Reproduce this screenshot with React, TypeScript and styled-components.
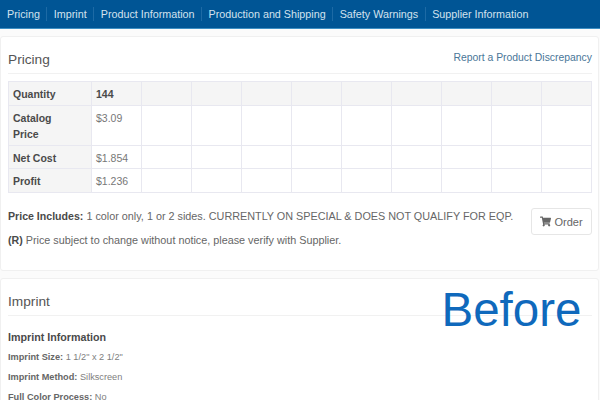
import React from 'react';
import styled, { createGlobalStyle } from 'styled-components';
import { FaShoppingCart } from 'react-icons/fa';

const navItems = [
    'Pricing',
    'Imprint',
    'Product Information',
    'Production and Shipping',
    'Safety Warnings',
    'Supplier Information',
];

const priceRows = [
    { label: 'Quantity', value: '144', header: true, compact: false },
    { label: 'Catalog Price', value: '$3.09', header: false, compact: false },
    { label: 'Net Cost', value: '$1.854', header: false, compact: true },
    { label: 'Profit', value: '$1.236', header: false, compact: false },
];

const emptyCells = Array.from({ length: 9 }, (_, i) => i);

const App = () => {
    return (
        <Page>
            <GlobalStyle />
            <Nav>
                {navItems.map((item) => (
                    <NavLink key={item}>{item}</NavLink>
                ))}
            </Nav>
            <Panel>
                <PanelHeader>
                    <PanelTitle>Pricing</PanelTitle>
                    <ReportLink>Report a Product Discrepancy</ReportLink>
                </PanelHeader>
                <PriceTable>
                    <colgroup>
                        <LabelCol />
                        <ValueCol />
                        {emptyCells.map((i) => (
                            <ValueCol key={i} />
                        ))}
                    </colgroup>
                    <tbody>
                        {priceRows.map((row) => (
                            <tr key={row.label}>
                                <LabelCell $compact={row.compact}>{row.label}</LabelCell>
                                <ValueCell $header={row.header} $compact={row.compact}>
                                    {row.value}
                                </ValueCell>
                                {emptyCells.map((i) => (
                                    <ValueCell key={i} $header={row.header} $compact={row.compact} />
                                ))}
                            </tr>
                        ))}
                    </tbody>
                </PriceTable>
                <NotesRow>
                    <Notes>
                        <Note>
                            <strong>Price Includes:</strong> 1 color only, 1 or 2 sides. CURRENTLY ON
                            SPECIAL &amp; DOES NOT QUALIFY FOR EQP.
                        </Note>
                        <Note>
                            <strong>(R)</strong> Price subject to change without notice, please verify
                            with Supplier.
                        </Note>
                    </Notes>
                    <OrderButton>
                        <FaShoppingCart size={11} />
                        Order
                    </OrderButton>
                </NotesRow>
            </Panel>
            <ImprintPanel>
                <PanelHeader>
                    <PanelTitle>Imprint</PanelTitle>
                </PanelHeader>
                <SectionTitle>Imprint Information</SectionTitle>
                <Detail>
                    <strong>Imprint Size:</strong> 1 1/2" x 2 1/2"
                </Detail>
                <Detail>
                    <strong>Imprint Method:</strong> Silkscreen
                </Detail>
                <Detail>
                    <strong>Full Color Process:</strong> No
                </Detail>
                <BeforeLabel>Before</BeforeLabel>
            </ImprintPanel>
        </Page>
    );
};

export default App;

const GlobalStyle = createGlobalStyle`
    html, body {
        margin: 0;
        padding: 0;
        height: 400px;
        overflow: hidden;
        background: #fbfbfb;
    }

    body {
        font-family: 'Liberation Sans', Arial, sans-serif;
        color: #333;
    }
`;

const Page = styled.div`
    width: 600px;
    height: 400px;
    overflow: hidden;
`;

const Nav = styled.nav`
    display: flex;
    align-items: center;
    height: 28px;
    background: #005595;
    border-bottom: 1px solid #3d8fc4;
    margin-bottom: 7px;
`;

const NavLink = styled.a`
    font-size: 10.75px;
    line-height: 14px;
    color: #d3e2ee;
    padding: 0 6.5px 0 6.5px;
    border-left: 1px solid #1d6aa5;

    &:first-child {
        border-left: 0;
        padding-left: 7px;
    }
`;

const Panel = styled.section`
    background: #fff;
    border: 1px solid #f0f0f0;
    border-radius: 3px;
    padding: 0 6px 0 7px;
    width: 599px;
    height: 235px;
    box-sizing: border-box;
`;

const ImprintPanel = styled(Panel)`
    position: relative;
    margin-top: 7px;
    height: 130px;
`;

const PanelHeader = styled.div`
    display: flex;
    justify-content: space-between;
    align-items: center;
    height: 31px;
    margin-top: 5px;
    border-bottom: 1px solid #f1f1f1;
    margin-bottom: 7px;
`;

const PanelTitle = styled.h2`
    margin: 3px 0 0;
    font-size: 13.7px;
    font-weight: 400;
    color: #555;
`;

const ReportLink = styled.a`
    font-size: 10.4px;
    color: #4a7698;
    margin-top: -1px;
`;

const PriceTable = styled.table`
    width: 584px;
    table-layout: fixed;
    border-collapse: collapse;
    font-size: 10.5px;
`;

const LabelCol = styled.col`
    width: 83px;
`;

const ValueCol = styled.col`
    width: 50px;
`;

const LabelCell = styled.th<{ $compact?: boolean }>`
    background: #f5f5f5;
    border: 1px solid #e8e8f0;
    padding: 4px 16px ${(p) => (p.$compact ? '2px' : '3px')} 4px;
    line-height: 16px;
    text-align: left;
    vertical-align: top;
    font-weight: 700;
    color: #4a4a4a;
`;

const ValueCell = styled.td<{ $header?: boolean; $compact?: boolean }>`
    background: ${(p) => (p.$header ? '#f5f5f5' : '#fff')};
    border: 1px solid #e8e8f0;
    padding: 4px 4px ${(p) => (p.$compact ? '2px' : '3px')};
    line-height: 16px;
    vertical-align: top;
    font-weight: ${(p) => (p.$header ? 700 : 400)};
    color: ${(p) => (p.$header ? '#4a4a4a' : '#777')};
`;

const NotesRow = styled.div`
    display: flex;
    justify-content: space-between;
    align-items: flex-start;
    margin-top: 16px;
`;

const Notes = styled.div`
    display: flex;
    flex-direction: column;
    gap: 9px;
`;

const Note = styled.p`
    margin: 0;
    font-size: 10.82px;
    line-height: 15px;
    color: #666;

    strong {
        font-size: 10.6px;
        color: #4a4a4a;
    }
`;

const OrderButton = styled.button`
    display: flex;
    align-items: center;
    justify-content: center;
    gap: 3px;
    width: 61px;
    height: 27px;
    margin-top: -1px;
    background: #fff;
    border: 1px solid #e6e6e6;
    border-radius: 3px;
    font-family: inherit;
    font-size: 11px;
    color: #666;
    padding: 0;
`;

const SectionTitle = styled.h3`
    margin: 14px 0 0;
    font-size: 10.7px;
    line-height: 14px;
    font-weight: 700;
    color: #4a4a4a;
`;

const Detail = styled.p`
    margin: 6px 0 0;
    font-size: 9.2px;
    line-height: 14px;
    color: #808080;

    strong {
        color: #666;
    }
`;

const BeforeLabel = styled.div`
    position: absolute;
    top: 1px;
    left: 440.5px;
    font-size: 47.5px;
    line-height: 60px;
    color: #0f69bc;
`;
